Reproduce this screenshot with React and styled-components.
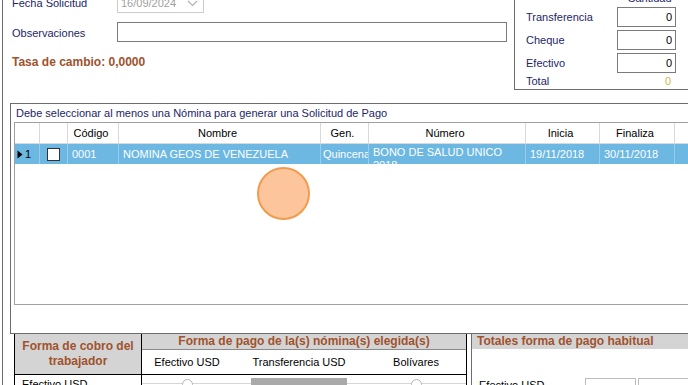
import React from 'react';
import styled, { createGlobalStyle } from 'styled-components';

const Global = createGlobalStyle`
  html, body { margin: 0; padding: 0; background: #fff; }
  body {
    font-family: "Liberation Sans", Arial, sans-serif;
    font-size: 11px;
    color: #000;
    overflow: hidden;
  }
  * { box-sizing: border-box; }
`;

const NAVY = '#1d2566';
const BROWN = '#a0522d';
const HEAD_GRAY = '#d4d4d4';

const Page = styled.div`
  width: 688px;
  height: 385px;
  overflow: hidden;
  position: relative;
  background: #fff;
  padding-left: 2px;
`;

const Frame = styled.div`
  border-left: 1px solid #6d6d6d;
  height: 100%;
  display: flex;
  flex-direction: column;
`;

/* ---------- top area ---------- */
const TopSection = styled.div`
  display: flex;
  margin-top: -10px;
  height: 100px;
  flex-shrink: 0;
`;

const LeftForm = styled.div`
  width: 511px;
  padding: 3px 0 0 9px;
  display: flex;
  flex-direction: column;
`;

const FieldRow = styled.div`
  display: flex;
  align-items: center;
  height: 20px;
  margin-top: ${p => p.$gap || 0}px;
`;

const FieldLabel = styled.div`
  width: 105px;
  color: ${NAVY};
`;

const DateBox = styled.div`
  width: 87px;
  height: 20px;
  border: 1px solid #cccccc;
  display: flex;
  align-items: center;
  justify-content: space-between;
  padding: 0 5px 0 3px;
  color: #a0a0a0;
`;

const TextBox = styled.div`
  width: 390px;
  height: 20px;
  border: 1px solid #7a7a7a;
  background: #fff;
  margin-top: -2px;
`;

const Rate = styled.div`
  margin-top: 12px;
  font-weight: bold;
  font-size: 12px;
  line-height: 14px;
  color: ${BROWN};
`;

const QtyBox = styled.div`
  width: 174px;
  height: 100px;
  border-left: 1px solid #6d6d6d;
  border-top: 1px solid #6d6d6d;
  border-bottom: 1px solid #6d6d6d;
  padding: 2px 0 0 11px;
  display: grid;
  grid-template-columns: 91px 59px;
  grid-template-rows: 11px 20px 20px 20px 13px;
  row-gap: 3px;
  align-items: center;
`;

const QtyHead = styled.div`
  grid-column: 2;
  text-align: center;
  color: ${NAVY};
  padding-left: 6px;
  line-height: 11px;
`;

const QtyLabel = styled.div`
  color: ${NAVY};
  margin-top: ${p => p.$shift || 0}px;
`;

const QtyInput = styled.div`
  height: 20px;
  border: 1px solid #7a7a7a;
  text-align: right;
  padding-right: 3px;
  line-height: 18px;
`;

const QtyTotal = styled.div`
  text-align: right;
  padding-right: 5px;
  color: #d2b64c;
  margin-top: -3px;
`;

/* ---------- group with grid ---------- */
const GroupBox = styled.div`
  margin: 13px 0 0 7px;
  height: 231px;
  flex-shrink: 0;
  border: 1px solid #6d6d6d;
  border-right: none;
  display: flex;
  flex-direction: column;
`;

const Caption = styled.div`
  height: 18px;
  line-height: 18px;
  padding-left: 5px;
  color: ${NAVY};
`;

const Grid = styled.div`
  margin-left: 3px;
  height: 183px;
  border: 1px solid #a0a0a0;
  border-right: none;
  background: #fff;
`;

const COLS = '25px 28px 51px 202px 48px 157px 74px 75px 1fr';

const HeaderRow = styled.div`
  display: grid;
  grid-template-columns: ${COLS};
  height: 21px;
  border-bottom: 1px solid #d9d9d9;
`;

const HeadCell = styled.div`
  border-right: 1px solid #d9d9d9;
  display: flex;
  align-items: center;
  justify-content: center;
  padding-right: 4px;
  white-space: nowrap;
  &:last-child { border-right: none; }
`;

const DataRow = styled.div`
  display: grid;
  grid-template-columns: ${COLS};
  height: 20px;
  background: #6cb8e2;
  color: #fff;
`;

const Cell = styled.div`
  border-right: 1px solid rgba(255, 255, 255, 0.3);
  overflow: hidden;
  white-space: ${p => (p.$wrap ? 'normal' : 'nowrap')};
  padding: ${p => (p.$wrap ? '2px 0 0 4px' : `0 0 0 ${p.$pad ?? 4}px`)};
  line-height: ${p => (p.$wrap ? '13px' : '20px')};
  display: ${p => (p.$center ? 'flex' : 'block')};
  align-items: center;
  justify-content: ${p => (p.$center ? 'center' : 'flex-start')};
  &:last-child { border-right: none; }
`;

const RowHeadCell = styled.div`
  border-right: 1px solid rgba(255, 255, 255, 0.3);
  display: flex;
  align-items: center;
  padding-left: 2px;
  gap: 2px;
  color: #000;
`;

const WrapText = styled.span`
  display: block;
  width: 140px;
`;

const CheckBox = styled.div`
  width: 13px;
  height: 13px;
  border: 1px solid #333;
  background: #fff;
  margin-left: -4px;
`;

/* ---------- bottom area ---------- */
const BottomSection = styled.div`
  display: flex;
  padding-left: 11px;
  flex: 1;
  min-height: 0;
`;

const LeftTable = styled.div`
  width: 453px;
  border-left: 1px solid #000;
  border-right: 1px solid #000;
  display: grid;
  grid-template-columns: 127px 324px;
  grid-template-rows: 41px 1fr;
`;

const CobroHead = styled.div`
  background: ${HEAD_GRAY};
  border-right: 1px solid #000;
  border-bottom: 1px solid #000;
  color: ${BROWN};
  font-weight: bold;
  font-size: 12px;
  line-height: 15px;
  text-align: center;
  padding-top: 5px;
`;

const PagoHeadBlock = styled.div`
  display: flex;
  flex-direction: column;
  border-bottom: 1px solid #000;
`;

const PagoTitle = styled.div`
  height: 16px;
  background: ${HEAD_GRAY};
  border-bottom: 1px solid #8a8a8a;
  color: ${BROWN};
  font-weight: bold;
  font-size: 12px;
  line-height: 15px;
  text-align: center;
`;

const SubHeads = styled.div`
  display: grid;
  grid-template-columns: 90px 134px 100px;
  flex: 1;
  align-items: center;
  text-align: center;
`;

const CobroLabel = styled.div`
  border-right: 1px solid #000;
  padding: 3px 0 0 7px;
`;

const Options = styled.div`
  display: grid;
  grid-template-columns: 90px 134px 100px;
`;

const OptionCell = styled.div`
  display: flex;
  justify-content: center;
  padding-top: 4px;
  background: linear-gradient(#d6d6d6, #d6d6d6) 0 8px / 100% 1px no-repeat;
`;

const Radio = styled.div`
  width: 11px;
  height: 11px;
  border: 1px solid #b5b5b5;
  border-radius: 50%;
  background: #fff;
`;

const GrayBlock = styled.div`
  width: 96px;
  margin-top: -1px;
  background: #a9a9a9;
`;

const Splitter = styled.div`
  width: 1px;
  margin-left: 1px;
  background: #5a5a5a;
`;

const TotalsPanel = styled.div`
  flex: 1;
  margin-left: 3px;
  border-left: 1px solid #6d6d6d;
  display: flex;
  flex-direction: column;
`;

const TotalsHead = styled.div`
  height: 16px;
  background: ${HEAD_GRAY};
  color: ${BROWN};
  font-weight: bold;
  font-size: 12px;
  line-height: 15px;
  padding-left: 5px;
`;

const TotalsRow = styled.div`
  display: flex;
  margin-top: 29px;
  padding-left: 7px;
`;

const TotalsLabel = styled.div`
  width: 106px;
  padding-top: 1px;
`;

const SmallBox = styled.div`
  width: 51px;
  height: 20px;
  border: 1px solid #bdbdbd;
  margin-right: 2px;
`;

const ClickMark = styled.div`
  position: absolute;
  left: 257px;
  top: 167px;
  width: 53px;
  height: 53px;
  border-radius: 50%;
  background: #fdc59b;
  border: 2px solid #f39b4c;
`;

const Chevron = () => (
  <svg width="11" height="7" viewBox="0 0 11 7">
    <path d="M1 1 L5.5 5.5 L10 1" fill="none" stroke="#b0b0b0" strokeWidth="1.1" />
  </svg>
);

const Arrow = () => (
  <svg width="6" height="9" viewBox="0 0 6 9">
    <path d="M0.5 0.5 L5.5 4.5 L0.5 8.5 Z" fill="#000" />
  </svg>
);

const headers = ['', '', 'Código', 'Nombre', 'Gen.', 'Número', 'Inicia', 'Finaliza', ''];

export default function App() {
  return (
    <>
      <Global />
      <Page>
        <Frame>
          <TopSection>
            <LeftForm>
              <FieldRow>
                <FieldLabel>Fecha Solicitud</FieldLabel>
                <DateBox>
                  <span>16/09/2024</span>
                  <Chevron />
                </DateBox>
              </FieldRow>
              <FieldRow $gap={10}>
                <FieldLabel>Observaciones</FieldLabel>
                <TextBox />
              </FieldRow>
              <Rate>Tasa de cambio: 0,0000</Rate>
            </LeftForm>
            <QtyBox>
              <QtyHead>Cantidad</QtyHead>
              <QtyLabel>Transferencia</QtyLabel>
              <QtyInput>0</QtyInput>
              <QtyLabel>Cheque</QtyLabel>
              <QtyInput>0</QtyInput>
              <QtyLabel>Efectivo</QtyLabel>
              <QtyInput>0</QtyInput>
              <QtyLabel $shift={-3}>Total</QtyLabel>
              <QtyTotal>0</QtyTotal>
            </QtyBox>
          </TopSection>

          <GroupBox>
            <Caption>Debe seleccionar al menos una Nómina para generar una Solicitud de Pago</Caption>
            <Grid>
              <HeaderRow>
                {headers.map((h, i) => (
                  <HeadCell key={i}>{h}</HeadCell>
                ))}
              </HeaderRow>
              <DataRow>
                <RowHeadCell>
                  <Arrow />
                  <span>1</span>
                </RowHeadCell>
                <Cell $center>
                  <CheckBox />
                </Cell>
                <Cell>0001</Cell>
                <Cell>NOMINA GEOS DE VENEZUELA</Cell>
                <Cell $pad={2}>Quincena</Cell>
                <Cell $wrap>
                  <WrapText>BONO DE SALUD UNICO 2018</WrapText>
                </Cell>
                <Cell>19/11/2018</Cell>
                <Cell>30/11/2018</Cell>
                <Cell />
              </DataRow>
            </Grid>
          </GroupBox>

          <BottomSection>
            <LeftTable>
              <CobroHead>
                Forma de cobro del
                <br />
                trabajador
              </CobroHead>
              <PagoHeadBlock>
                <PagoTitle>Forma de pago de la(s) nómina(s) elegida(s)</PagoTitle>
                <SubHeads>
                  <span>Efectivo USD</span>
                  <span>Transferencia USD</span>
                  <span>Bolívares</span>
                </SubHeads>
              </PagoHeadBlock>
              <CobroLabel>Efectivo USD</CobroLabel>
              <Options>
                <OptionCell>
                  <Radio />
                </OptionCell>
                <OptionCell>
                  <GrayBlock />
                </OptionCell>
                <OptionCell>
                  <Radio />
                </OptionCell>
              </Options>
            </LeftTable>
            <Splitter />
            <TotalsPanel>
              <TotalsHead>Totales forma de pago habitual</TotalsHead>
              <TotalsRow>
                <TotalsLabel>Efectivo USD</TotalsLabel>
                <SmallBox />
                <SmallBox />
              </TotalsRow>
            </TotalsPanel>
          </BottomSection>
        </Frame>
        <ClickMark />
      </Page>
    </>
  );
}
